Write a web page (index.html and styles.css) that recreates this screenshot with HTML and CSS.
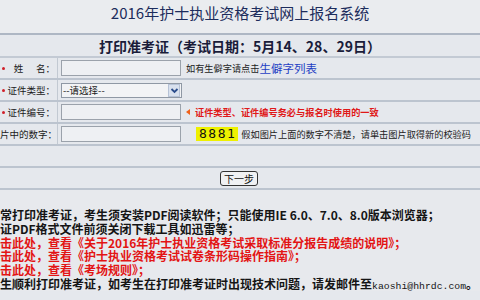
FILE: index.html
```html
<!DOCTYPE html>
<html lang="zh-CN">
<head>
<meta charset="utf-8">
<title>2016年护士执业资格考试网上报名系统</title>
<link rel="stylesheet" href="styles.css">
</head>
<body>
<div class="title">2016年护士执业资格考试网上报名系统</div>
<div class="subtitle">打印准考证（考试日期：5月14、28、29日）</div>
<div class="form">
  <div class="row">
    <div class="label"><span class="dot"></span><span>姓&nbsp;&nbsp;&nbsp;&nbsp;&nbsp;&nbsp;名：</span></div>
    <div class="field">
      <span class="input"></span>
      <span class="note">如有生僻字请点击</span><a class="link">生僻字列表</a>
    </div>
  </div>
  <div class="row">
    <div class="label"><span class="dot"></span><span>证件类型：</span></div>
    <div class="field">
      <span class="select"><span class="opt">--请选择--</span><span class="arrow"><svg width="9" height="9" viewBox="0 0 9 9"><path d="M1.5 3 L4.5 6 L7.5 3" fill="none" stroke="#2b4d8c" stroke-width="1.8"/></svg></span></span>
    </div>
  </div>
  <div class="row">
    <div class="label"><span class="dot"></span><span>证件编号：</span></div>
    <div class="field">
      <span class="input"></span>
      <span class="warn"><span class="tri"></span>证件类型、证件编号务必与报名时使用的一致</span>
    </div>
  </div>
  <div class="row">
    <div class="label"><span>片中的数字：</span></div>
    <div class="field">
      <span class="input"></span>
      <span class="captcha">8881</span>
      <span class="note">假如图片上面的数字不清楚，请单击图片取得新的校验码</span>
    </div>
  </div>
  <div class="row empty"></div>
  <div class="row btnrow"><button class="btn">下一步</button></div>
</div>
<div class="notes">
  <p>常打印准考证，考生须安装PDF阅读软件；只能使用IE 6.0、7.0、8.0版本浏览器；</p>
  <p>证PDF格式文件前须关闭下载工具如迅雷等；</p>
  <p class="red">击此处，查看《关于2016年护士执业资格考试采取标准分报告成绩的说明》；</p>
  <p class="red">击此处，查看《护士执业资格考试试卷条形码操作指南》；</p>
  <p class="red">击此处，查看《考场规则》；</p>
  <p>生顺利打印准考证，如考生在打印准考证时出现技术问题，请发邮件至<span class="mail">kaoshi@hhrdc.com</span>。</p>
</div>
</body>
</html>
```
FILE: styles.css
```css
html, body {
  margin: 0;
  padding: 0;
}
body {
  width: 480px;
  height: 300px;
  overflow: hidden;
  background: #e5e8ed;
  font-family: "Noto Sans CJK SC", sans-serif;
  color: #1b1b1b;
}
.title {
  height: 33px;
  background: #eaecef;
  border-bottom: 2px solid #aeb7c4;
  text-align: center;
  font-size: 15px;
  line-height: 25px;
  color: #1c2c5c;
}
.subtitle {
  height: 21px;
  border-bottom: 2px solid #c3cad4;
  text-align: center;
  font-size: 14px;
  font-weight: bold;
  line-height: 22px;
  color: #1a1c3a;
}
.row {
  display: flex;
  height: 20px;
  border-bottom: 2px solid #bcc4cf;
}
.label {
  width: 55px;
  flex: none;
  display: flex;
  align-items: center;
  justify-content: space-between;
  padding-right: 2px;
  border-right: 1px solid #c2c9d2;
  font-size: 9.5px;
  white-space: nowrap;
  overflow: hidden;
}
.label span:only-child {
  margin-left: auto;
}
.dot {
  width: 3px;
  height: 3px;
  border-radius: 50%;
  background: #d0202a;
  margin-left: 2px;
}
.field {
  display: flex;
  align-items: center;
  padding-left: 3px;
  white-space: nowrap;
}
.input {
  width: 118px;
  height: 14px;
  border: 1px solid #9ba2ab;
  background: #eef0f3;
  flex: none;
}
.select {
  width: 119px;
  height: 13px;
  border: 1px solid #8f98a4;
  background: #f2f3f5;
  display: flex;
  align-items: center;
  justify-content: space-between;
  font-size: 9.5px;
  flex: none;
}
.opt {
  padding-left: 1px;
}
.arrow {
  width: 10px;
  height: 11px;
  margin-right: 1px;
  background: #d9e1ee;
  border: 1px solid #b6c2d6;
  display: flex;
  align-items: center;
  justify-content: center;
}
.note {
  font-size: 9.2px;
  margin-left: 5px;
  color: #222;
}
.link {
  font-size: 11.5px;
  color: #1f3fc4;
}
.warn {
  display: flex;
  align-items: center;
  margin-left: 5px;
  font-size: 9.2px;
  font-weight: bold;
  color: #e01818;
}
.tri {
  width: 0;
  height: 0;
  border-top: 3px solid transparent;
  border-bottom: 3px solid transparent;
  border-right: 4px solid #f06018;
  margin-right: 5px;
}
.captcha {
  margin-left: 15px;
  background: #eef000;
  padding: 0 2px 0 3px;
  height: 14px;
  line-height: 14px;
  font-family: "DejaVu Sans Mono", monospace;
  font-size: 13px;
  letter-spacing: 1.5px;
  color: #111;
}
.captcha + .note {
  margin-left: 3px;
}
.btnrow {
  justify-content: flex-start;
  align-items: center;
  padding-left: 220px;
}
.btn {
  width: 38px;
  height: 15px;
  padding: 0;
  border: 1px solid #333;
  border-radius: 3px;
  background: #f0f1f3;
  font-family: "Noto Sans CJK SC", sans-serif;
  font-size: 10px;
  line-height: 13px;
  color: #111;
}
.notes {
  padding-top: 18px;
  background: #e7e9ed;
}
.notes p {
  margin: 0;
  height: 13.8px;
  font-size: 12px;
  line-height: 13.8px;
  font-weight: bold;
  white-space: nowrap;
  color: #151515;
}
.notes p.red {
  color: #e31414;
}
.mail {
  font-family: "Liberation Mono", monospace;
  font-size: 9.8px;
  font-weight: normal;
}
```
